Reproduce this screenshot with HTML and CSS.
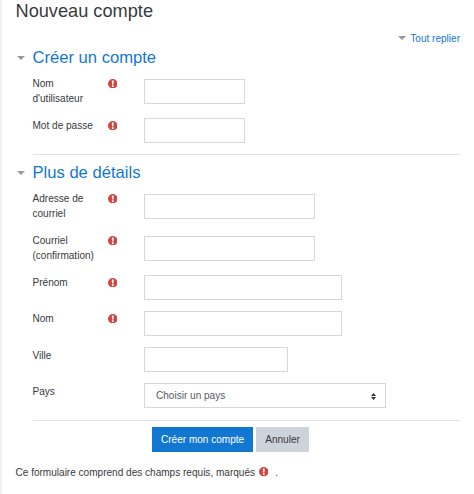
FILE: index.html
```html
<!DOCTYPE html>
<html lang="fr">
<head>
  <meta charset="UTF-8" />
  <meta name="viewport" content="width=device-width, initial-scale=1.0"/>
  <title>Nouveau compte</title>
  <link rel="stylesheet" href="styles.css">
</head>
<body>
  <svg class="sprite" aria-hidden="true">
    <symbol id="required" viewBox="0 0 20 20">
      <circle cx="10" cy="10" r="10" fill="#d3433f"/>
      <path d="M8 3.2h4l-.5 8.6h-3zM8.2 13.2h3.6v3.4H8.2z" fill="#fff"/>
    </symbol>
  </svg>

  <main class="page">
    <h1>Nouveau compte</h1>

    <div class="collapse-all">
      <span class="caret"></span>
      <a href="#">Tout replier</a>
    </div>

    <form>
      <section class="account">
        <h2><span class="caret"></span><a href="#">Créer un compte</a></h2>
        <div class="fields">
          <div class="row">
            <label for="username">Nom d'utilisateur</label>
            <svg class="icon"><use href="#required"/></svg>
            <input class="small" type="text" id="username">
          </div>
          <div class="row">
            <label for="password">Mot de passe</label>
            <svg class="icon"><use href="#required"/></svg>
            <input class="small" type="password" id="password">
          </div>
        </div>
      </section>

      <section class="details">
        <h2><span class="caret"></span><a href="#">Plus de détails</a></h2>
        <div class="fields">
          <div class="row">
            <label for="email">Adresse de courriel</label>
            <svg class="icon"><use href="#required"/></svg>
            <input class="large" type="text" id="email">
          </div>
          <div class="row">
            <label for="email2">Courriel (confirmation)</label>
            <svg class="icon"><use href="#required"/></svg>
            <input class="large" type="text" id="email2">
          </div>
          <div class="row">
            <label for="firstname">Prénom</label>
            <svg class="icon"><use href="#required"/></svg>
            <input class="xlarge" type="text" id="firstname">
          </div>
          <div class="row">
            <label for="lastname">Nom</label>
            <svg class="icon"><use href="#required"/></svg>
            <input class="xlarge" type="text" id="lastname">
          </div>
          <div class="row optional">
            <label for="city">Ville</label>
            <input class="medium" type="text" id="city">
          </div>
          <div class="row optional">
            <label for="country">Pays</label>
            <div class="select">
              <select id="country">
                <option>Choisir un pays</option>
              </select>
              <svg class="arrows" viewBox="0 0 5 7"><path d="M0 3l2.5-3L5 3zM0 4h5L2.5 7z" fill="#333"/></svg>
            </div>
          </div>
        </div>
      </section>

      <div class="actions">
        <button type="submit" class="primary">Créer mon compte</button>
        <button type="button">Annuler</button>
      </div>
    </form>

    <p class="note">Ce formulaire comprend des champs requis, marqués <svg class="icon"><use href="#required"/></svg> .</p>
  </main>
</body>
</html>
```

FILE: styles.css
```css
* {
  box-sizing: border-box;
}

body {
  margin: 0;
  font-family: "Liberation Sans", Arial, sans-serif;
  font-size: 10.05px;
  line-height: 15.5px;
  color: #373a3c;
  background: #fff;
}

a {
  color: #1177d1;
  text-decoration: none;
}

.sprite {
  display: none;
}

.page {
  min-height: 494px;
  padding: 0 14px 0 13.5px;
  border-left: 2px solid #f0f0f0;
}

h1 {
  margin: 0;
  font-size: 18.2px;
  line-height: 22px;
  font-weight: normal;
}

.collapse-all {
  display: flex;
  justify-content: flex-end;
  align-items: center;
  gap: 4px;
  margin-top: 8.5px;
}

.caret {
  width: 8px;
  border: 4px solid transparent;
  border-top-color: #999;
  border-bottom: 0;
}

h2 {
  display: flex;
  align-items: center;
  gap: 8px;
  margin: 0;
  padding-left: 1px;
  font-size: 16.6px;
  line-height: 20px;
  font-weight: normal;
}

.account {
  margin-top: 1.5px;
}

.details {
  margin-top: 8px;
}

.fields {
  display: flex;
  flex-direction: column;
  gap: 11px;
  margin-left: 17px;
  padding-top: 8px;
  padding-bottom: 11px;
  border-bottom: 1px solid #e0e3e5;
}

.details .fields {
  padding-bottom: 12px;
}

.row {
  display: grid;
  grid-template-columns: 75px 36.5px 1fr;
  align-items: center;
}

.row label {
  align-self: start;
  width: 66px;
}

.optional label {
  padding-top: 1px;
}

.row .icon {
  align-self: start;
  margin-top: 3px;
}

.icon {
  width: 9.5px;
  height: 9.5px;
}

input,
.select {
  grid-column: 3;
  height: 25px;
  border: 1px solid #d5d8da;
  background: #fff;
}

input {
  padding: 0 12px;
  font: inherit;
}

.small {
  width: 101px;
}

.medium {
  width: 144px;
}

.large {
  width: 171px;
}

.xlarge {
  width: 198px;
}

.select {
  display: flex;
  align-items: center;
  width: 242px;
  padding: 2px 9px 0 11px;
}

select {
  appearance: none;
  flex: 1;
  padding: 0;
  border: 0;
  background: none;
  font: inherit;
  color: #55595c;
}

.arrows {
  width: 5px;
  height: 7px;
}

.actions {
  display: flex;
  gap: 3px;
  margin: 6px 0 0 136.5px;
}

button {
  height: 25px;
  padding: 2px 9px 0;
  border: 0;
  font: inherit;
  color: #373a3c;
  background: #ced2da;
}

.primary {
  color: #fff;
  background: #1177d1;
}

.note {
  margin: 13px 0 0;
}

.note .icon {
  margin: 0 4px 0 1px;
  vertical-align: -1px;
}
```
